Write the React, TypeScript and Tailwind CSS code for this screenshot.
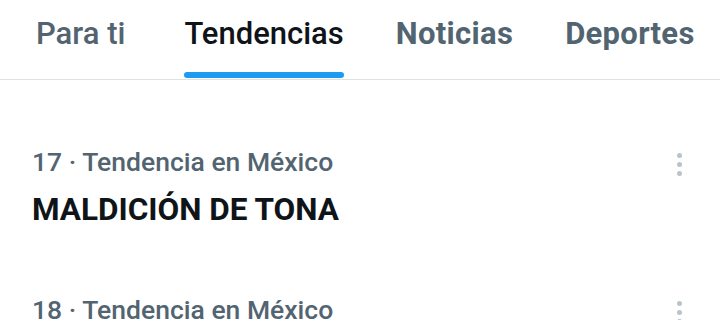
import React from 'react';

const tabs = [
  { label: 'Para ti', cls: 'text-[#536471] font-medium mr-[7px]', active: false },
  { label: 'Tendencias', cls: 'text-[#0f1419] font-medium', active: true },
  { label: 'Noticias', cls: 'text-[#536471] font-bold tracking-[0.3px]', active: false },
  { label: 'Deportes', cls: 'text-[#536471] font-bold tracking-[0.3px]', active: false },
];

const trends = [
  { rank: 17, title: 'MALDICIÓN DE TONA' },
  { rank: 18, title: 'Cruz Azul' },
];

function Dots() {
  return (
    <div className="flex flex-col gap-[4px] pt-[7px]">
      <span className="w-[5px] h-[5px] rounded-full bg-[#b9c3cb]" />
      <span className="w-[5px] h-[5px] rounded-full bg-[#b9c3cb]" />
      <span className="w-[5px] h-[5px] rounded-full bg-[#b9c3cb]" />
    </div>
  );
}

export default function App() {
  return (
    <div className="w-[720px] h-[320px] overflow-hidden bg-white" style={{ fontFamily: 'Roboto, "Noto Sans", sans-serif' }}>
      <div className="flex h-[80px] border-b border-[#dde3e6] pl-[36px] gap-[52px]">
        {tabs.map((t) => (
          <div key={t.label} className="flex flex-col items-stretch">
            <div className={`h-[72px] pb-[5px] flex items-center text-[31px] leading-none whitespace-nowrap ${t.cls}`}>{t.label}</div>
            {t.active && <div className="h-[6px] rounded-full bg-[#1d9bf0]" />}
          </div>
        ))}
      </div>
      <div className="flex flex-col">
        {trends.map((tr) => (
          <div key={tr.rank} className="flex justify-between pl-[32px] pr-[38px] pt-[66px] h-[148px]">
            <div className="flex flex-col">
              <div className="text-[26.5px] leading-[32px] font-medium text-[#536471] whitespace-nowrap">{tr.rank} · Tendencia en México</div>
              <div className="mt-[14px] text-[31.5px] leading-[36px] font-bold text-[#0f1419] whitespace-nowrap">{tr.title}</div>
            </div>
            <Dots />
          </div>
        ))}
      </div>
    </div>
  );
}
